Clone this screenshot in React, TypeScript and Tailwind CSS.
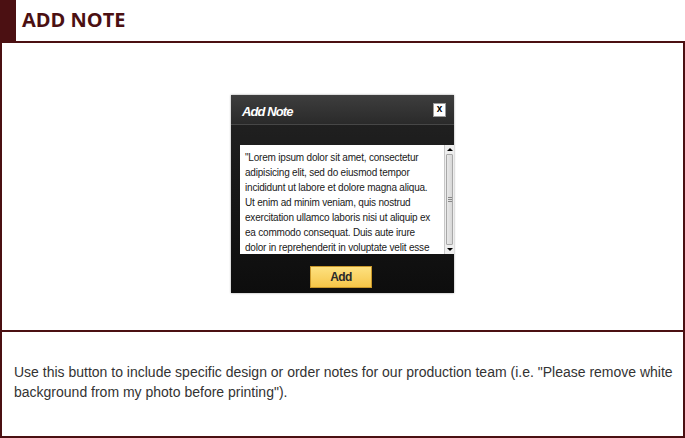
import React from "react";

const lines = [
  "\"Lorem ipsum dolor sit amet, consectetur",
  "adipisicing elit, sed do eiusmod tempor",
  "incididunt ut labore et dolore magna aliqua.",
  "Ut enim ad minim veniam, quis nostrud",
  "exercitation ullamco laboris nisi ut aliquip ex",
  "ea commodo consequat. Duis aute irure",
  "dolor in reprehenderit in voluptate velit esse",
];

export default function App() {
  return (
    <div className="w-[685px] h-[438px] bg-white flex flex-col overflow-hidden">
      <div className="h-[41px] flex items-stretch">
        <div className="w-[16px] bg-[#4b1012]" />
        <div className="pl-[6px] pt-[4px] text-[20px] font-bold text-[#4b1012] font-['Open_Sans',sans-serif] leading-[32px]">
          ADD NOTE
        </div>
      </div>
      <div className="flex-1 border-2 border-[#4b1012] flex flex-col">
        <div className="h-[289px] border-b-2 border-[#4b1012] flex justify-center pt-[52px]">
          <div className="w-[223px] h-[198px] flex flex-col bg-gradient-to-b from-[#232323] to-[#0d0d0d] shadow-[0_0_2px_rgba(0,0,0,0.4)]">
            <div className="h-[30px] flex items-center justify-between pl-[11px] pr-[8px] bg-gradient-to-b from-[#3e3e3e] to-[#2a2a2a] border-b border-[#474747]">
              <span className="text-white italic font-bold text-[13px] tracking-[-0.9px] pt-[4px] font-['Liberation_Sans',sans-serif]">
                Add Note
              </span>
              <div className="w-[13px] h-[14px] bg-white border border-[#9a9a9a] flex items-center justify-center text-[10px] font-bold text-black leading-none font-['Liberation_Sans',sans-serif] pb-[1px]">
                x
              </div>
            </div>
            <div className="mt-[20px] ml-[9px] h-[109px] flex bg-white">
              <div className="flex-1 pl-[5px] pt-[5px] text-[10px] tracking-[-0.2px] leading-[15px] text-[#1a1a1a] font-['Liberation_Sans',sans-serif] whitespace-nowrap overflow-hidden">
                {lines.map((l, i) => (
                  <div key={i}>{l}</div>
                ))}
              </div>
              <div className="w-[10px] bg-[#eeeeee] border-l border-[#c8c8c8] flex flex-col">
                <div className="h-[9px] flex items-center justify-center">
                  <div className="w-0 h-0 border-l-[3px] border-r-[3px] border-b-[3px] border-l-transparent border-r-transparent border-b-black" />
                </div>
                <div className="flex-1 mx-[1px] bg-gradient-to-r from-[#e8e8e8] to-[#d8d8d8] border border-[#a8a8a8] rounded-[1px] flex flex-col items-center justify-center gap-[1px]">
                  <div className="w-[4px] h-px bg-[#888]" />
                  <div className="w-[4px] h-px bg-[#888]" />
                  <div className="w-[4px] h-px bg-[#888]" />
                </div>
                <div className="h-[9px] flex items-center justify-center">
                  <div className="w-0 h-0 border-l-[3px] border-r-[3px] border-t-[3px] border-l-transparent border-r-transparent border-t-black" />
                </div>
              </div>
            </div>
            <div className="flex justify-center mt-[12px] pr-[3px]">
              <div className="w-[62px] h-[22px] bg-gradient-to-b from-[#fde17f] to-[#f6c647] border border-[#c8972a] flex items-center justify-center text-[12px] font-bold text-[#2a2a2a] tracking-[-0.6px] font-['Liberation_Sans',sans-serif]">
                Add
              </div>
            </div>
          </div>
        </div>
        <div className="flex-1 pl-[12px] pt-[30px] text-[14px] leading-[20px] text-[#333333] font-['Liberation_Sans',sans-serif]">
          Use this button to include specific design or order notes for our production team (i.e. "Please remove white background from my photo before printing").
        </div>
      </div>
    </div>
  );
}
